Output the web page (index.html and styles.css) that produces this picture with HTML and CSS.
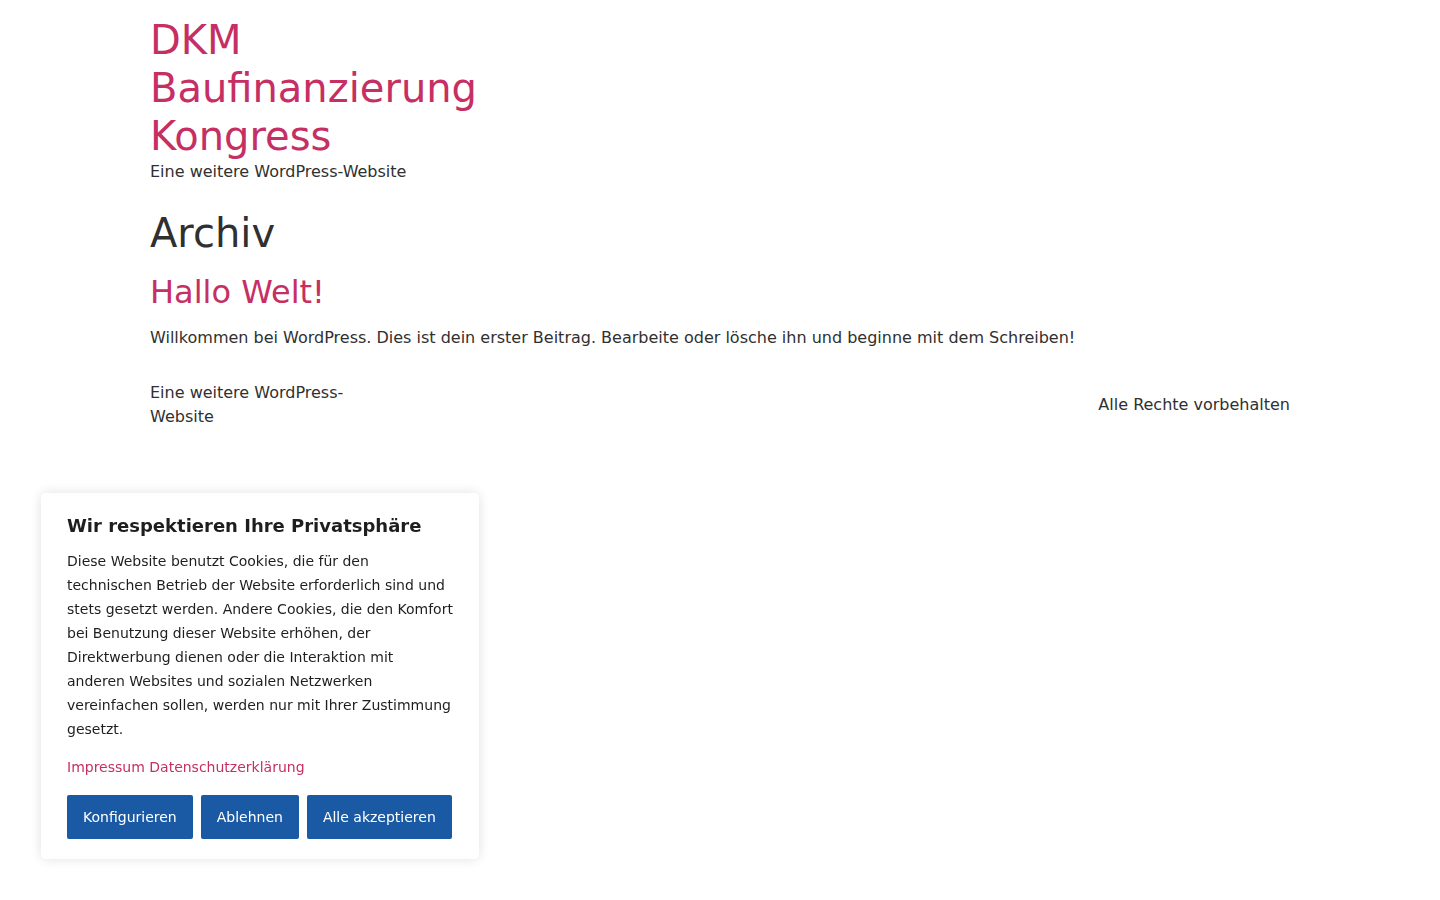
FILE: index.html
```html
<!DOCTYPE html>
<html lang="de">
<head>
<meta charset="utf-8">
<title>Archiv – DKM Baufinanzierung Kongress</title>
<link rel="stylesheet" href="styles.css">
</head>
<body>
<div class="page">
  <header class="site-header">
    <div class="branding">
      <a class="site-title" href="#">DKM Baufinanzierung Kongress</a>
      <p class="site-description">Eine weitere WordPress-Website</p>
    </div>
  </header>
  <main class="site-main">
    <h1 class="page-title">Archiv</h1>
    <article class="post">
      <h2 class="entry-title"><a href="#">Hallo Welt!</a></h2>
      <p class="entry-summary">Willkommen bei WordPress. Dies ist dein erster Beitrag. Bearbeite oder lösche ihn und beginne mit dem Schreiben!</p>
    </article>
  </main>
  <footer class="site-footer">
    <div class="footer-name">Eine weitere WordPress-Website</div>
    <div class="footer-rights">Alle Rechte vorbehalten</div>
  </footer>
</div>

<div class="cookie-box">
  <h3 class="cookie-title">Wir respektieren Ihre Privatsphäre</h3>
  <p class="cookie-text">Diese Website benutzt Cookies, die für den technischen Betrieb der Website erforderlich sind und stets gesetzt werden. Andere Cookies, die den Komfort bei Benutzung dieser Website erhöhen, der Direktwerbung dienen oder die Interaktion mit anderen Websites und sozialen Netzwerken vereinfachen sollen, werden nur mit Ihrer Zustimmung gesetzt.</p>
  <p class="cookie-links"><a href="#">Impressum</a> <a href="#">Datenschutzerklärung</a></p>
  <div class="cookie-buttons">
    <button class="btn">Konfigurieren</button>
    <button class="btn">Ablehnen</button>
    <button class="btn">Alle akzeptieren</button>
  </div>
</div>
</body>
</html>
```

FILE: styles.css
```css
html, body {
  margin: 0;
  padding: 0;
  background: #ffffff;
}

body {
  font-family: "DejaVu Sans", Verdana, sans-serif;
  color: #303030;
  font-size: 16px;
  line-height: 24px;
}

a {
  color: #c62f63;
  text-decoration: none;
}

.page {
  width: 1140px;
  margin: 0 auto;
}

.site-header {
  padding-top: 16px;
}

.branding {
  width: 380px;
}

.site-title {
  display: block;
  font-size: 40px;
  line-height: 48px;
}

.site-description {
  margin: 0;
  font-size: 16px;
  line-height: 24px;
}

.site-main {
  padding-top: 25px;
}

.page-title {
  margin: 0;
  font-size: 40px;
  line-height: 48px;
  font-weight: normal;
}

.entry-title {
  margin: 16px 0 0;
  font-size: 32px;
  line-height: 38px;
  font-weight: normal;
}

.entry-summary {
  margin: 15px 0 0;
}

.site-footer {
  margin-top: 31px;
  display: flex;
  justify-content: space-between;
  align-items: center;
}

.footer-name {
  width: 228px;
}

.cookie-box {
  position: fixed;
  left: 41px;
  bottom: 41px;
  width: 386px;
  padding: 20px 26px 20px;
  background: #ffffff;
  border-radius: 5px;
  box-shadow: 0 0 12px rgba(0, 0, 0, 0.12);
  color: #1e1e1e;
}

.cookie-title {
  margin: 0;
  font-size: 18px;
  line-height: 26px;
  font-weight: bold;
}

.cookie-text {
  margin: 10px 0 0;
  font-size: 14px;
  line-height: 24px;
}

.cookie-links {
  margin: 14px 0 0;
  font-size: 14px;
  line-height: 24px;
}

.cookie-buttons {
  margin-top: 16px;
  display: flex;
  gap: 8px;
}

.btn {
  font-family: "DejaVu Sans", Verdana, sans-serif;
  font-size: 14px;
  line-height: 20px;
  color: #ffffff;
  background: #1a5aa5;
  border: none;
  border-radius: 2px;
  padding: 12px 16px;
  cursor: pointer;
}
```
